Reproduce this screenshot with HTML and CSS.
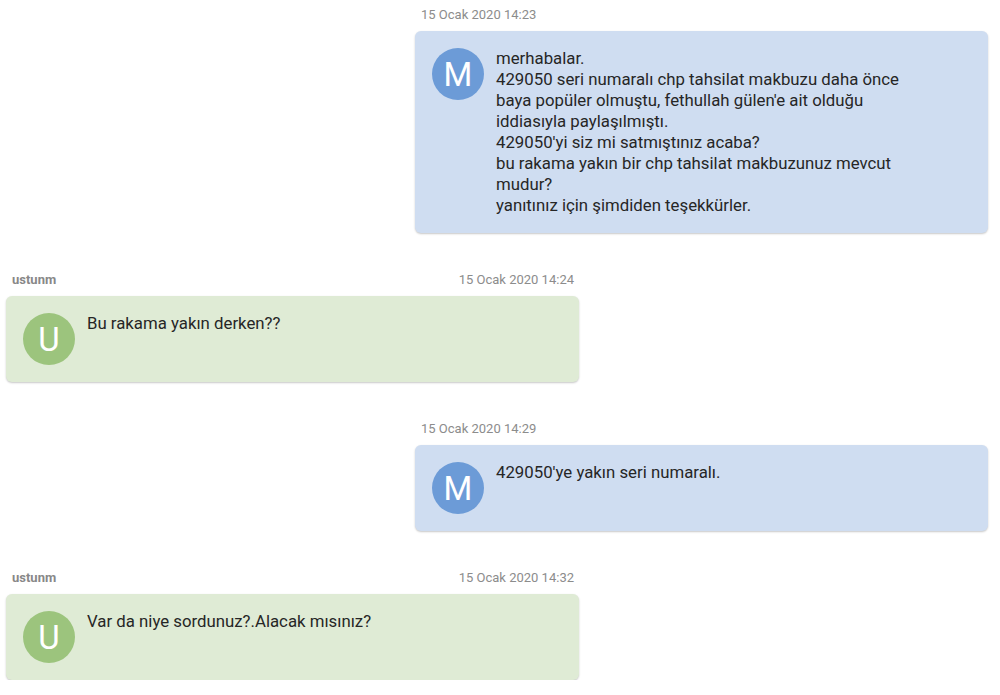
FILE: index.html
```html
<!DOCTYPE html>
<html lang="tr">
<head>
<meta charset="utf-8">
<title>Mesajlar</title>
<link rel="stylesheet" href="styles.css">
</head>
<body>
<div class="thread">
  <div class="msg mine">
    <div class="meta"><span class="time">15 Ocak 2020 14:23</span></div>
    <div class="bubble blue">
      <div class="avatar">M</div>
      <div class="text">merhabalar.<br>429050 seri numaralı chp tahsilat makbuzu daha önce<br>baya popüler olmuştu, fethullah gülen'e ait olduğu<br>iddiasıyla paylaşılmıştı.<br>429050'yi siz mi satmıştınız acaba?<br>bu rakama yakın bir chp tahsilat makbuzunuz mevcut<br>mudur?<br>yanıtınız için şimdiden teşekkürler.</div>
    </div>
  </div>
  <div class="msg theirs">
    <div class="meta"><span class="name">ustunm</span><span class="time">15 Ocak 2020 14:24</span></div>
    <div class="bubble green">
      <div class="avatar">U</div>
      <div class="text">Bu rakama yakın derken??</div>
    </div>
  </div>
  <div class="msg mine">
    <div class="meta"><span class="time">15 Ocak 2020 14:29</span></div>
    <div class="bubble blue">
      <div class="avatar">M</div>
      <div class="text">429050'ye yakın seri numaralı.</div>
    </div>
  </div>
  <div class="msg theirs">
    <div class="meta"><span class="name">ustunm</span><span class="time">15 Ocak 2020 14:32</span></div>
    <div class="bubble green">
      <div class="avatar">U</div>
      <div class="text">Var da niye sordunuz?.Alacak mısınız?</div>
    </div>
  </div>
</div>
</body>
</html>
```

FILE: styles.css
```css
html, body {
  margin: 0;
  padding: 0;
  background: #ffffff;
}

body {
  font-family: Roboto, "Noto Sans", "Liberation Sans", sans-serif;
  color: #222222;
}

.thread {
  display: flex;
  flex-direction: column;
  gap: 39px;
  padding: 7px 12px 0 6px;
}

.msg {
  width: 573px;
  display: flex;
  flex-direction: column;
  gap: 8px;
}

.msg.mine {
  align-self: flex-end;
}

.msg.theirs {
  align-self: flex-start;
}

.meta {
  display: flex;
  justify-content: space-between;
  align-items: center;
  height: 16px;
  padding: 0 5px 0 6px;
  font-size: 13px;
  line-height: 16px;
}

.time {
  color: #8c8c8c;
}

.name {
  color: #888888;
  font-weight: 700;
}

.bubble {
  display: flex;
  align-items: flex-start;
  gap: 12px;
  padding: 17px 17px;
  border-radius: 6px;
  box-shadow: 0 1px 2px rgba(0, 0, 0, 0.22);
}

.bubble.blue {
  background: #cfddf1;
}

.bubble.green {
  background: #dfebd5;
}

.avatar {
  flex: none;
  width: 52px;
  height: 52px;
  border-radius: 50%;
  display: flex;
  align-items: center;
  justify-content: center;
  color: #ffffff;
  font-size: 33px;
  line-height: 1;
}

.blue .avatar {
  background: #6c9bd7;
}

.green .avatar {
  background: #9cc47d;
}

.text {
  font-size: 16.8px;
  line-height: 21px;
  color: #262626;
}
```
